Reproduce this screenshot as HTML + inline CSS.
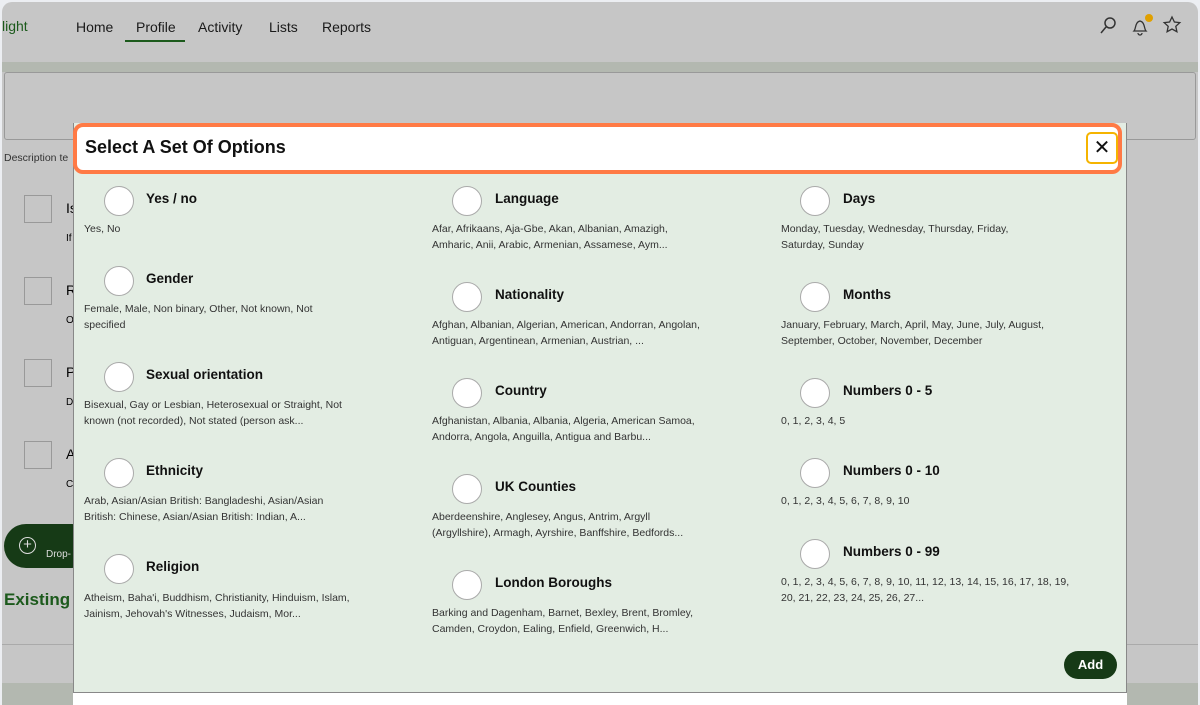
<!DOCTYPE html>
<html><head><meta charset="utf-8"><style>
*{margin:0;padding:0;box-sizing:border-box}
body{width:1200px;height:705px;overflow:hidden;background:#eceef2;font-family:"Liberation Sans",sans-serif;position:relative}
.frame{position:absolute;left:2px;top:2px;width:1196px;height:703px;background:#c6c6c6;border-radius:10px 10px 0 0;overflow:hidden}
.a{position:absolute}
.nav{font-size:14px;color:#1a1a1a;top:17px}
.box{position:absolute;left:22px;width:28px;height:28px;border:1px solid #999}
.modal{position:absolute;left:73px;top:123px;width:1054px;height:582px;background:#e3ede3;border-left:1px solid #888;border-right:1px solid #888}
.hdr{position:absolute;left:73px;top:123px;width:1049px;height:51px;background:#fff;border:4px solid #ff7a45;border-radius:10px}
.c{position:absolute;width:30px;height:30px;border-radius:50%;background:#fff;border:1px solid #aaa}
.t{position:absolute;font-size:13.5px;font-weight:bold;color:#111}
.d{position:absolute;font-size:10.5px;color:#333;line-height:16px;width:262px}
</style></head><body><div class="frame">
<div class="a" style="left:0;top:16px;font-size:14px;color:#1c5a1c">light</div>
<div class="a nav" style="left:74px">Home</div>
<div class="a nav" style="left:134px">Profile</div>
<div class="a" style="left:123px;top:38px;width:60px;height:2px;background:#1c5a1c"></div>
<div class="a nav" style="left:196px">Activity</div>
<div class="a nav" style="left:267px">Lists</div>
<div class="a nav" style="left:320px">Reports</div>
<svg class="a" style="left:1096px;top:14px" width="20" height="20" viewBox="0 0 20 20" fill="none" stroke="#333" stroke-width="1.5"><circle cx="12" cy="7" r="5"/><path d="M8 11L3 17"/></svg>
<svg class="a" style="left:1127px;top:14px" width="22" height="20" viewBox="0 0 22 20" fill="none" stroke="#333" stroke-width="1.3"><path d="M5 15c2-2 1-9 6-10 5 1 4 8 6 10zM9 17a2 2 0 004 0"/></svg>
<div class="a" style="left:1143px;top:12px;width:8px;height:8px;border-radius:50%;background:#e0a000"></div>
<svg class="a" style="left:1160px;top:13px" width="20" height="20" viewBox="0 0 20 20" fill="none" stroke="#333" stroke-width="1.3"><path d="M10 2l2.4 5 5.4.6-4 3.7 1.1 5.4L10 14l-4.9 2.7 1.1-5.4-4-3.7 5.4-.6z"/></svg>
<div class="a" style="left:0;top:60px;width:1196px;height:10px;background:#b3b8b0"></div>
<div class="a" style="left:2px;top:70px;width:1192px;height:68px;border:1px solid #999;border-radius:3px"></div>
<div class="a" style="left:2px;top:150px;font-size:10.5px;color:#333">Description te</div>
<div class="box" style="top:193px"></div><div class="a" style="left:64px;top:198px;font-size:14px">Is</div><div class="a" style="left:64px;top:231px;font-size:10px">If</div>
<div class="box" style="top:275px"></div><div class="a" style="left:64px;top:280px;font-size:14px">R</div><div class="a" style="left:64px;top:313px;font-size:10px">O</div>
<div class="box" style="top:357px"></div><div class="a" style="left:64px;top:362px;font-size:14px">P</div><div class="a" style="left:64px;top:395px;font-size:10px">D</div>
<div class="box" style="top:439px"></div><div class="a" style="left:64px;top:444px;font-size:14px">A</div><div class="a" style="left:64px;top:477px;font-size:10px">C</div>
<div class="a" style="left:2px;top:522px;width:90px;height:44px;border-radius:22px;background:#163a16"></div>
<div class="a" style="left:17px;top:535px;width:17px;height:17px;border:1.5px solid #ddd;border-radius:50%;color:#ddd;font-size:15px;line-height:13px;text-align:center">+</div>
<div class="a" style="left:44px;top:547px;font-size:10px;color:#ddd">Drop-</div>
<div class="a" style="left:2px;top:588px;font-size:17px;color:#1c5a1c;font-weight:bold">Existing</div>
<div class="a" style="left:0;top:642px;width:1196px;height:1px;background:#aaa"></div>
<div class="a" style="left:0;top:681px;width:1196px;height:24px;background:#b3b8b0"></div>
</div>
<div class="modal"></div>
<div class="a" style="left:73px;top:692px;width:1054px;height:13px;background:#fff;border-top:1px solid #888"></div>
<div class="hdr"></div>
<div class="a" style="left:85px;top:137px;font-size:18px;font-weight:bold;color:#111">Select A Set Of Options</div>
<div class="a" style="left:1086px;top:132px;width:32px;height:32px;border:2px solid #f5b400;border-radius:5px;background:#fff;text-align:center;font-size:20px;line-height:28px;color:#111">✕</div>

<div class="c" style="left:104px;top:186px"></div><div class="t" style="left:146px;top:191px">Yes / no</div><div class="d" style="left:84px;top:221px">Yes, No</div>
<div class="c" style="left:104px;top:266px"></div><div class="t" style="left:146px;top:271px">Gender</div><div class="d" style="left:84px;top:301px;width:245px">Female, Male, Non binary, Other, Not known, Not specified</div>
<div class="c" style="left:104px;top:362px"></div><div class="t" style="left:146px;top:367px">Sexual orientation</div><div class="d" style="left:84px;top:397px">Bisexual, Gay or Lesbian, Heterosexual or Straight, Not known (not recorded), Not stated (person ask...</div>
<div class="c" style="left:104px;top:458px"></div><div class="t" style="left:146px;top:463px">Ethnicity</div><div class="d" style="left:84px;top:493px">Arab, Asian/Asian British: Bangladeshi, Asian/Asian British: Chinese, Asian/Asian British: Indian, A...</div>
<div class="c" style="left:104px;top:554px"></div><div class="t" style="left:146px;top:559px">Religion</div><div class="d" style="left:84px;top:590px;width:280px">Atheism, Baha'i, Buddhism, Christianity, Hinduism, Islam, Jainism, Jehovah's Witnesses, Judaism, Mor...</div>

<div class="c" style="left:452px;top:186px"></div><div class="t" style="left:495px;top:191px">Language</div><div class="d" style="left:432px;top:221px">Afar, Afrikaans, Aja-Gbe, Akan, Albanian, Amazigh, Amharic, Anii, Arabic, Armenian, Assamese, Aym...</div>
<div class="c" style="left:452px;top:282px"></div><div class="t" style="left:495px;top:287px">Nationality</div><div class="d" style="left:432px;top:317px;width:275px">Afghan, Albanian, Algerian, American, Andorran, Angolan, Antiguan, Argentinean, Armenian, Austrian, ...</div>
<div class="c" style="left:452px;top:378px"></div><div class="t" style="left:495px;top:383px">Country</div><div class="d" style="left:432px;top:413px;width:275px">Afghanistan, Albania, Albania, Algeria, American Samoa, Andorra, Angola, Anguilla, Antigua and Barbu...</div>
<div class="c" style="left:452px;top:474px"></div><div class="t" style="left:495px;top:479px">UK Counties</div><div class="d" style="left:432px;top:509px;width:260px">Aberdeenshire, Anglesey, Angus, Antrim, Argyll (Argyllshire), Armagh, Ayrshire, Banffshire, Bedfords...</div>
<div class="c" style="left:452px;top:570px"></div><div class="t" style="left:495px;top:575px">London Boroughs</div><div class="d" style="left:432px;top:605px;width:270px">Barking and Dagenham, Barnet, Bexley, Brent, Bromley, Camden, Croydon, Ealing, Enfield, Greenwich, H...</div>

<div class="c" style="left:800px;top:186px"></div><div class="t" style="left:843px;top:191px">Days</div><div class="d" style="left:781px;top:221px;width:250px">Monday, Tuesday, Wednesday, Thursday, Friday, Saturday, Sunday</div>
<div class="c" style="left:800px;top:282px"></div><div class="t" style="left:843px;top:287px">Months</div><div class="d" style="left:781px;top:317px;width:275px">January, February, March, April, May, June, July, August, September, October, November, December</div>
<div class="c" style="left:800px;top:378px"></div><div class="t" style="left:843px;top:383px">Numbers 0 - 5</div><div class="d" style="left:781px;top:413px">0, 1, 2, 3, 4, 5</div>
<div class="c" style="left:800px;top:458px"></div><div class="t" style="left:843px;top:463px">Numbers 0 - 10</div><div class="d" style="left:781px;top:493px">0, 1, 2, 3, 4, 5, 6, 7, 8, 9, 10</div>
<div class="c" style="left:800px;top:539px"></div><div class="t" style="left:843px;top:544px">Numbers 0 - 99</div><div class="d" style="left:781px;top:574px;width:290px">0, 1, 2, 3, 4, 5, 6, 7, 8, 9, 10, 11, 12, 13, 14, 15, 16, 17, 18, 19, 20, 21, 22, 23, 24, 25, 26, 27...</div>

<div class="a" style="left:1064px;top:651px;width:53px;height:28px;border-radius:14px;background:#163a16;color:#fff;font-weight:bold;font-size:13px;text-align:center;line-height:28px">Add</div>
</body></html>
